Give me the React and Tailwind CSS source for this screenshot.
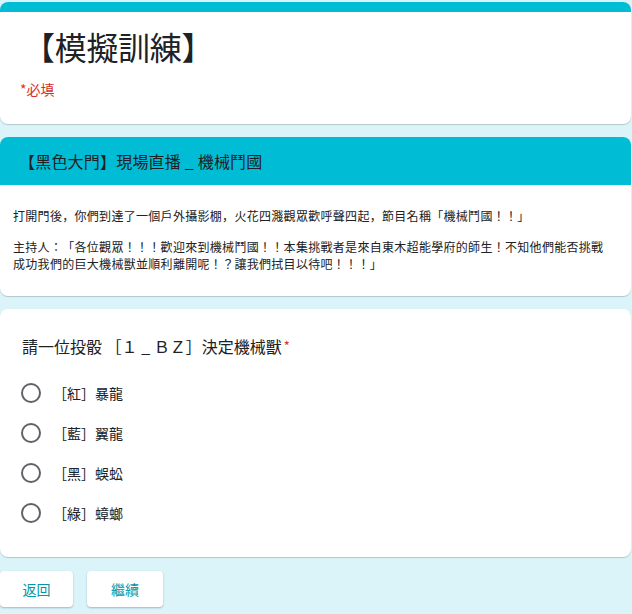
import React from 'react';

const font = { fontFamily: '"Noto Sans CJK JP", "Noto Sans CJK TC", Roboto, sans-serif' };

const options = ['［紅］暴龍', '［藍］翼龍', '［黑］蜈蚣', '［綠］蟑螂'];

function Radio({ label }) {
  return (
    <div className="flex items-center h-[40px]">
      <span className="w-[20px] h-[20px] rounded-full border-2 border-[#5f6368] ml-[21px]" />
      <span className="ml-[12px] text-[14px] leading-5 text-[#202124]">{label}</span>
    </div>
  );
}

export default function App() {
  return (
    <div className="min-h-[614px] bg-[#daf4f9] pt-[2px] w-[632px] [text-spacing-trim:space-all]" style={font}>
      <div className="w-[631px] flex flex-col">
        {/* title card */}
        <div className="bg-white rounded-lg overflow-hidden shadow-[0_1px_1px_rgba(0,0,0,0.18)]">
          <div className="h-[10px] bg-[#00bcd4]" />
          <div className="px-[20px] pt-[14px] pb-[25px]">
            <h1 className="ml-[3px] text-[32px] leading-[40px] text-[#202124] tracking-[-0.3px]">【模擬訓練】</h1>
            <p className="mt-[13px] text-[14px] leading-5 text-[#d93025]">*必填</p>
          </div>
        </div>

        {/* section card */}
        <div className="mt-[13px] bg-white rounded-lg overflow-hidden shadow-[0_1px_1px_rgba(0,0,0,0.18)]">
          <div className="h-[48px] bg-[#00bcd4] flex items-center px-[19px]">
            <span className="text-[16px] leading-6 text-[#202124] tracking-[0.2px]">【黑色大門】現場直播 _ 機械鬥國</span>
          </div>
          <div className="px-[13px] pt-[22px] pb-[24px] text-[12px] leading-[17px] text-[#202124] tracking-[0.3px]">
            <p className="whitespace-nowrap">打開門後，你們到達了一個戶外攝影棚，火花四濺觀眾歡呼聲四起，節目名稱「機械鬥國！！」</p>
            <p className="mt-[14px] whitespace-nowrap">
              主持人：「各位觀眾！！！歡迎來到機械鬥國！！本集挑戰者是來自東木超能學府的師生！不知他們能否挑戰
              <br />
              成功我們的巨大機械獸並順利離開呢！？讓我們拭目以待吧！！！」
            </p>
          </div>
        </div>

        {/* question card */}
        <div className="mt-[13px] bg-white rounded-lg shadow-[0_1px_1px_rgba(0,0,0,0.18)] pt-[25px] pb-[24px]">
          <div className="px-[22px] text-[16px] leading-6 text-[#202124]">
            請一位投骰 ［１ _ ＢＺ］決定機械獸
            <span className="text-[#d93025] text-[13px] align-top ml-[2px]">*</span>
          </div>
          <div className="mt-[15px] flex flex-col">
            {options.map((o) => (
              <Radio key={o} label={o} />
            ))}
          </div>
        </div>

        {/* buttons */}
        <div className="mt-[14px] flex gap-[14px]">
          <button className="w-[73px] h-[36px] bg-white rounded shadow-[0_1px_2px_rgba(0,0,0,0.25)] text-[14px] text-[#0097a7]">
            返回
          </button>
          <button className="w-[76px] h-[36px] bg-white rounded shadow-[0_1px_2px_rgba(0,0,0,0.25)] text-[14px] text-[#0097a7]">
            繼續
          </button>
        </div>
      </div>
    </div>
  );
}
